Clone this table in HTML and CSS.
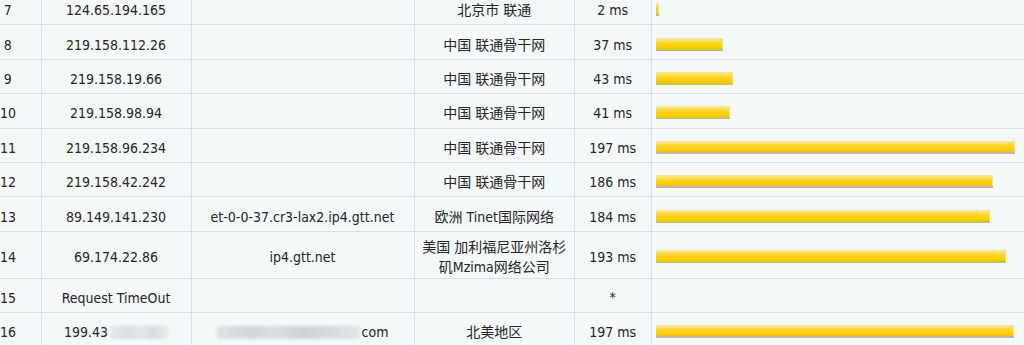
FILE: index.html
```html
<!DOCTYPE html>
<html lang="zh-CN">
<head>
<meta charset="utf-8">
<title>Traceroute</title>
<link rel="stylesheet" href="styles.css">
</head>
<body>
<table class="trace">
  <colgroup>
    <col class="c-hop"><col class="c-ip"><col class="c-host"><col class="c-loc"><col class="c-ms"><col class="c-bar">
  </colgroup>
  <tbody>
    <tr>
      <td class="hop">7</td><td>124.65.194.165</td><td></td><td>北京市 联通</td><td>2 ms</td>
      <td class="graph"><span class="bar" style="width:3px"></span></td>
    </tr>
    <tr>
      <td class="hop">8</td><td>219.158.112.26</td><td></td><td>中国 联通骨干网</td><td>37 ms</td>
      <td class="graph"><span class="bar" style="width:67px"></span></td>
    </tr>
    <tr>
      <td class="hop">9</td><td>219.158.19.66</td><td></td><td>中国 联通骨干网</td><td>43 ms</td>
      <td class="graph"><span class="bar" style="width:77px"></span></td>
    </tr>
    <tr>
      <td class="hop">10</td><td>219.158.98.94</td><td></td><td>中国 联通骨干网</td><td>41 ms</td>
      <td class="graph"><span class="bar" style="width:74px"></span></td>
    </tr>
    <tr>
      <td class="hop">11</td><td>219.158.96.234</td><td></td><td>中国 联通骨干网</td><td>197 ms</td>
      <td class="graph"><span class="bar" style="width:359px"></span></td>
    </tr>
    <tr>
      <td class="hop">12</td><td>219.158.42.242</td><td></td><td>中国 联通骨干网</td><td>186 ms</td>
      <td class="graph"><span class="bar" style="width:337px"></span></td>
    </tr>
    <tr>
      <td class="hop">13</td><td>89.149.141.230</td><td>et-0-0-37.cr3-lax2.ip4.gtt.net</td><td>欧洲 Tinet国际网络</td><td>184 ms</td>
      <td class="graph"><span class="bar" style="width:334px"></span></td>
    </tr>
    <tr class="tall">
      <td class="hop">14</td><td>69.174.22.86</td><td>ip4.gtt.net</td><td>美国 加利福尼亚州洛杉矶Mzima网络公司</td><td>193 ms</td>
      <td class="graph"><span class="bar" style="width:350px"></span></td>
    </tr>
    <tr>
      <td class="hop">15</td><td>Request TimeOut</td><td></td><td></td><td class="star">*</td>
      <td class="graph"></td>
    </tr>
    <tr class="last">
      <td class="hop">16</td><td>199.43<span class="mask mask-ip"></span></td><td><span class="mask mask-host"></span>com</td><td>北美地区</td><td>197 ms</td>
      <td class="graph"><span class="bar" style="width:358px"></span></td>
    </tr>
  </tbody>
</table>
</body>
</html>
```
FILE: styles.css
```css
html, body {
  margin: 0;
  padding: 0;
  overflow: hidden;
  background: #f3f8f9;
}

body {
  font-family: "DejaVu Sans Condensed", "DejaVu Sans", "Noto Sans CJK SC", sans-serif;
  font-size: 14px;
  color: #262626;
}

.trace {
  width: 100%;
  margin-top: -9.5px;
  border-collapse: collapse;
  table-layout: fixed;
}

.c-hop { width: 41px; }
.c-ip { width: 150px; }
.c-host { width: 223px; }
.c-loc { width: 160.5px; }
.c-ms { width: 76.5px; }

.trace td {
  height: 34.4px;
  padding: 5px 6px 0;
  line-height: 20px;
  text-align: center;
  vertical-align: middle;
  border-right: 1px solid #d5e0eb;
  border-bottom: 1px solid #d5e0eb;
  box-sizing: border-box;
}

.trace tr.tall td {
  height: 46.9px;
}

.trace tr.last td {
  border-bottom: none;
}

.trace td.hop {
  padding: 5px 25px 0 0;
}

.trace td.graph {
  text-align: left;
  padding: 2px 0 0 4px;
  border-right: none;
}

.trace td.star {
  padding-top: 3px;
}

.bar {
  display: block;
  height: 11px;
  box-sizing: border-box;
  background: linear-gradient(to bottom, #ffe58a 0%, #ffe35c 20%, #ffd622 45%, #ffcd00 75%, #f5c400 100%);
  border-right: 1px solid #ffe27e;
  box-shadow: 0 2px 0 #b9b8ad;
}

.mask {
  display: inline-block;
  height: 13px;
  vertical-align: -2px;
  filter: blur(1.5px);
}

.mask-ip {
  width: 58px;
  margin-left: 2px;
  background: linear-gradient(to right, #e6e8ea 0, #dcdfe1 30%, #e4e6e8 55%, #d9dcde 75%, #e8eaeb 100%);
}

.mask-host {
  width: 143px;
  margin-right: 2px;
  background: linear-gradient(to right, #dfe1e3 0, #d2d5d8 25%, #dcdfe1 40%, #cfd2d5 60%, #d8dbdd 80%, #e3e5e7 100%);
}
```
